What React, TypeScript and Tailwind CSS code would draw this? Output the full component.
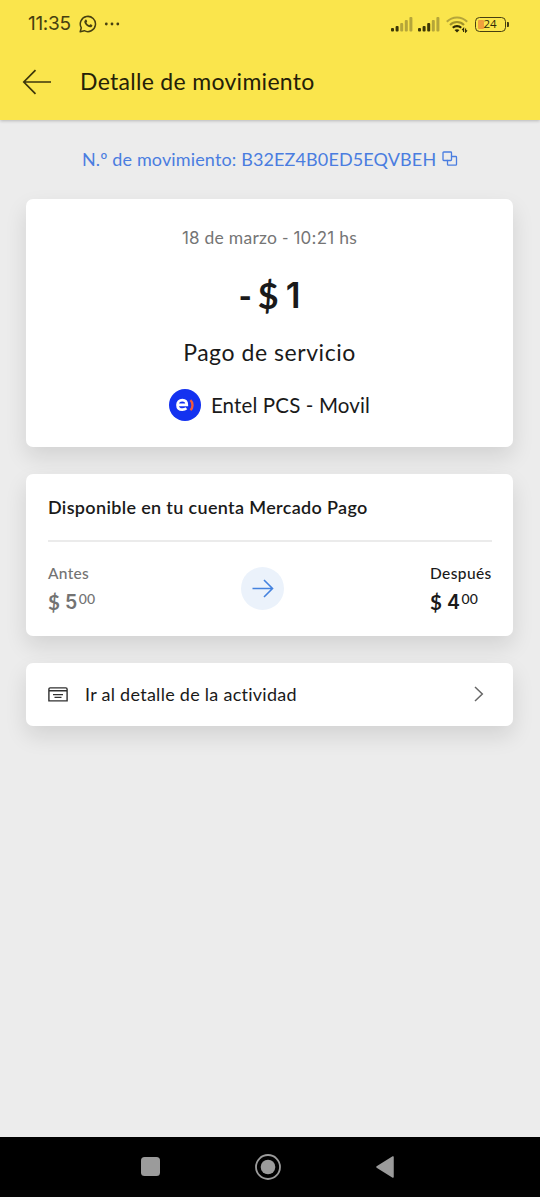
import React from 'react';

const lato = "font-['Lato','Open_Sans',sans-serif]";
const inter = "font-['Inter','Roboto',sans-serif]";
const cardShadow = 'rounded-[7px] bg-white shadow-[0_10px_22px_rgba(0,0,0,0.11)]';

function Signal({ strong }: { strong: number }) {
  const heights = [3.5, 5.5, 8.5, 11.5, 14.5];
  return (
    <svg width="22" height="15" viewBox="0 0 22 15">
      {heights.map((h, i) => (
        <rect key={i} x={i * 4.6} y={14.5 - h} width="3" height={h} rx="1" fill={i < strong ? '#3d3706' : '#b5a53a'} />
      ))}
    </svg>
  );
}

function StatusBar() {
  return (
    <div className="flex h-12 items-center pl-[28px] pr-[31px] text-[#463f10]">
      <span className={`${inter} w-[42px] whitespace-nowrap text-[19px] leading-6 font-normal tracking-[-0.3px]`}>11:35</span>
      <svg className="ml-[9px]" width="18" height="18" viewBox="0 0 18 18" fill="none">
        <path d="M1.2 16.8l1.1-4A7.6 7.6 0 1 1 5.3 15.700z" stroke="currentColor" strokeWidth="1.5" strokeLinejoin="round" />
        <path d="M6.200 5c.5-.6 1.200-.5 1.400.1l.5 1.200c.1.400 0 .6-.7 1.400.7 1.200 1.600 2 2.900 2.500.8-.9 1-1.100 1.500-.9l1.300.7c.5.300.3 1.200-.3 1.700-1.200 1-2.700.6-4.400-.4C6.700 10.300 5.100 8.200 5.300 6.600c.1-.7.500-1.200.9-1.600z" fill="currentColor" />
      </svg>
      <svg className="ml-[7px]" width="17" height="4" viewBox="0 0 17 4" fill="currentColor">
        <circle cx="2.300" cy="2" r="1.400" /><circle cx="8" cy="2" r="1.400" /><circle cx="13.800" cy="2" r="1.400" />
      </svg>
      <div className="ml-auto flex items-center">
        <Signal strong={2} />
        <div className="ml-[5px] flex"><Signal strong={3} /></div>
        <svg className="ml-[6px]" width="22" height="17" viewBox="0 0 22 17" fill="none">
          <path d="M.8 5.800a14 14 0 0 1 20.400 0" stroke="#b5a53a" strokeWidth="2" />
          <path d="M4 9a9.700 9.700 0 0 1 14 0" stroke="#a19229" strokeWidth="2" />
          <path d="M6.800 11.800a6 6 0 0 1 8.400 0" stroke="#2d2805" strokeWidth="2.200" />
          <path d="M8.500 14.100q2.500-1.800 5 0L11 16.500z" fill="#2d2805" />
          <path d="M17.600 16v-3.500l-1.500 1.600M19.600 12.500V16l1.500-1.600" stroke="#2d2805" strokeWidth="1.100" />
        </svg>
        <div className="ml-[7px] flex h-[15px] w-[31px] items-center rounded-[4.5px] border-[1.5px] border-[#463f10] pl-[1.5px]">
          <div className="h-[9px] w-[6px] rounded-[1px] bg-[#f0a03e]" />
          <span className="font-['Open_Sans',sans-serif] text-[11.5px] leading-3 font-normal text-[#302a08]">24</span>
        </div>
        <div className="ml-px h-[5px] w-[2px] rounded-r-[1px] bg-[#463f10]" />
      </div>
    </div>
  );
}

function Money({ whole }: { whole: string }) {
  return (
    <div className="mt-[3px] flex h-[28px] items-center whitespace-nowrap leading-7">
      <span className={`${lato} text-[20.5px] font-bold`}>$</span>
      <span className={`${inter} ml-[5px] text-[19.5px] font-semibold`}>{whole}</span>
      <span className={`${lato} ml-[1.500px] -mt-[6px] text-[14px] font-medium tracking-[0.3px]`}>00</span>
    </div>
  );
}

export default function App() {
  return (
    <div className={`${lato} flex h-[1200px] w-[540px] flex-col overflow-hidden bg-[#ececec] text-[#1a1a1a] [font-variant-ligatures:none]`}>
      <header className="h-[120px] shrink-0 bg-[#fae54c] shadow-[0_1px_3px_rgba(0,0,0,0.22)]">
        <StatusBar />
        <div className="flex h-[68px] items-center pl-[22px]">
          <svg width="30" height="26" viewBox="0 0 30 26" fill="none" stroke="#3c360b" strokeWidth="1.700">
            <path d="M29 13H1.800M13.500 1.200L1.800 13l11.700 11.800" />
          </svg>
          <h1 className="mb-[2px] ml-[28px] text-[23px] leading-8 font-normal tracking-[0.300px] whitespace-nowrap text-[#242008]">Detalle de movimiento</h1>
        </div>
      </header>

      <main className="flex flex-1 flex-col pr-[27px] pl-[26px]">
        <div className="mt-[25px] flex h-7 items-center pl-[56px] text-[#4a7de0]">
          <span className="text-[18px] leading-7 tracking-[0.130px] whitespace-nowrap">N.º de movimiento: B32EZ4B0ED5EQVBEH</span>
          <svg className="ml-[6px] shrink-0" width="16" height="16" viewBox="0 0 16 16" fill="none" stroke="currentColor" strokeWidth="1.300">
            <path d="M5.500 9.500H1.800a.8.8 0 0 1-.8-.8V1.800A.8.8 0 0 1 1.800 1h6.900a.8.8 0 0 1 .8.8v3.700" />
            <path d="M9.500 5.500h4.200a.8.8 0 0 1 .8.8v7.100a.8.8 0 0 1-.8.8H6.300a.8.8 0 0 1-.8-.8V9.500h3.200a.8.8 0 0 0 .8-.8z" />
          </svg>
        </div>

        <section className={`${cardShadow} mt-[26px] flex h-[248px] shrink-0 flex-col items-center pt-[25px]`}>
          <p className="h-7 text-[17.5px] leading-7 tracking-[0.250px] whitespace-nowrap text-[#757575]">
            <span className={`${inter} text-[17px]`}>18</span> de marzo - <span className={`${inter} text-[17px]`}>10:21</span> hs
          </p>
          <p className="mt-[19px] flex h-12 items-center text-[36px] leading-[48px] font-bold whitespace-nowrap">
            <span>-</span><span className="ml-[6px]">$</span><span className={`${inter} ml-[7px] text-[35px] font-semibold`}>1</span>
          </p>
          <p className="mt-[17px] h-8 text-[23px] leading-8 tracking-[0.550px] whitespace-nowrap">Pago de servicio</p>
          <div className="mt-[21px] flex h-8 items-center gap-[10px]">
            <svg width="32" height="32" viewBox="0 0 32 32" fill="none">
              <circle cx="16" cy="16" r="16" fill="#1432f0" />
              <path d="M9 15.900h8.800c0-3.100-1.700-4.800-4.500-4.800-2.900 0-4.800 1.900-4.800 4.800 0 3.100 1.900 4.700 4.900 4.700 1.700 0 3-.5 4-1.400" stroke="#fff" strokeWidth="2.700" />
              <path d="M21.400 11.200c2.800 2.500 2.800 7.400 0 10" stroke="#f05a3c" strokeWidth="2.400" />
            </svg>
            <span className="mb-[1px] text-[20.5px] leading-8 tracking-[0.150px] whitespace-nowrap">Entel PCS - Movil</span>
          </div>
        </section>

        <section className={`${cardShadow} mt-[27px] flex h-[162px] shrink-0 flex-col pr-[21px] pl-[22px] pt-[19px]`}>
          <h2 className="h-7 text-[18px] leading-7 font-semibold tracking-[0.340px] whitespace-nowrap">Disponible en tu cuenta Mercado Pago</h2>
          <div className="mt-[19px] h-[2px] shrink-0 bg-[#ebebeb]" />
          <div className="mt-[19px] flex justify-between">
            <div className="w-[47px] text-[#737373]">
              <p className="h-6 text-[15.5px] leading-6 font-medium tracking-[0.300px]">Antes</p>
              <Money whole="5" />
            </div>
            <div className="mt-[6px] flex size-[43px] items-center justify-center rounded-full bg-[#ebf2fb]">
              <svg width="22" height="19" viewBox="0 0 22 19" fill="none" stroke="#4482de" strokeWidth="1.600">
                <path d="M.5 9.500h20M12 1l8.500 8.500L12 18" />
              </svg>
            </div>
            <div className="w-[62px]">
              <p className="h-6 text-[15.5px] leading-6 font-medium tracking-[0.400px] whitespace-nowrap">Después</p>
              <Money whole="4" />
            </div>
          </div>
        </section>

        <section className={`${cardShadow} mt-[26.500px] flex h-[63.500px] shrink-0 items-center pr-[29px] pl-[22px]`}>
          <svg width="20" height="15" viewBox="0 0 20 15" fill="none" stroke="#303030" strokeWidth="1.400">
            <path d="M.9 13.900V2.200Q.9.900 2.200.900h15.600q1.300 0 1.300 1.300v11.700zM.9 3.700h18.200M5 7.600h10M6.500 10.400h7" />
          </svg>
          <span className="ml-[17px] text-[18px] leading-7 tracking-[0.270px] whitespace-nowrap">Ir al detalle de la actividad</span>
          <svg className="ml-auto" width="10" height="16" viewBox="0 0 10 16" fill="none" stroke="#666" strokeWidth="1.500">
            <path d="M1 1l7.300 7L1 15" />
          </svg>
        </section>
      </main>

      <nav className="flex h-[59.500px] shrink-0 items-center bg-black pl-[141px]">
        <div className="size-[19px] rounded-[3.500px] bg-[#9b9b9b]" />
        <svg className="ml-[95px]" width="26" height="26" viewBox="0 0 26 26">
          <circle cx="13" cy="13" r="12" fill="none" stroke="#9b9b9b" strokeWidth="1.800" />
          <circle cx="13" cy="13" r="7.300" fill="#9b9b9b" />
        </svg>
        <svg className="ml-[95px]" width="18" height="22" viewBox="0 0 18 22">
          <path d="M1 11L17 1v20z" fill="#9b9b9b" stroke="#9b9b9b" strokeWidth="1.500" strokeLinejoin="round" />
        </svg>
      </nav>
      <div className="h-[3.500px] shrink-0 bg-[#f7f7f7]" />
    </div>
  );
}
